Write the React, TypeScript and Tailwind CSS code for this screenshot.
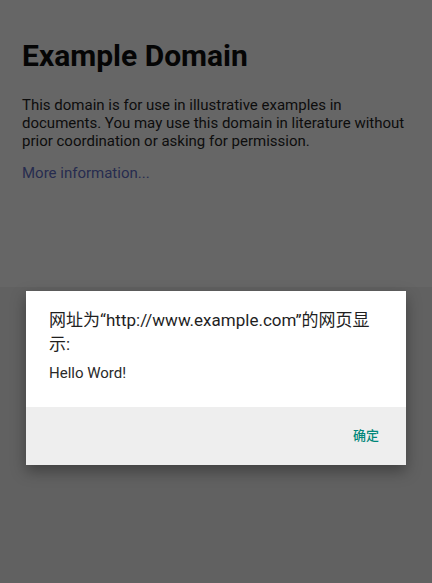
import React from 'react';

const font = { fontFamily: 'Roboto, "Noto Sans CJK SC", sans-serif' };

export default function App() {
  return (
    <div className="relative h-[583px] w-full overflow-hidden bg-[#616161]" style={font}>
      <div className="h-[287px] bg-[#666666] px-[22px] pt-[38px]">
        <h1 className="text-[30px] font-bold leading-[36px] text-[#050505]">Example Domain</h1>
        <p className="mt-[22px] text-[15px] leading-[18px] text-[#0d0d0d]">
          This domain is for use in illustrative examples in documents. You may use this domain in
          literature without prior coordination or asking for permission.
        </p>
        <p className="mt-[14px] text-[15px] leading-[18px]">
          <a className="text-[#262c4f]">More information...</a>
        </p>
      </div>

      <div className="absolute left-[26px] top-[291px] w-[380px] bg-white shadow-[0_6px_14px_rgba(0,0,0,0.35)]">
        <div className="px-[23px] pb-[24px] pt-[17px]">
          <h2 className="text-[17px] leading-[24px] text-[#1f1f1f]">
            网址为“http://www.example.com”的网页显示:
          </h2>
          <p className="mt-[7px] text-[15px] leading-[20px] text-[#2a2a2a]">Hello Word!</p>
        </div>
        <div className="flex h-[58px] items-center justify-end bg-[#eeeeee] pr-[27px]">
          <button className="text-[13px] font-medium leading-[20px] text-[#00877a]">确定</button>
        </div>
      </div>
    </div>
  );
}
